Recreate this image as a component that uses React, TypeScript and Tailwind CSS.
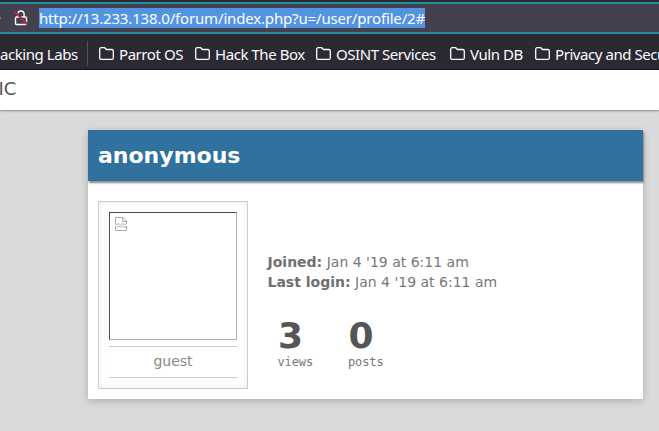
import type { ReactNode } from "react";

function Folder() {
  return (
    <svg className="mt-[2px] h-4 w-[15px] shrink-0" viewBox="0 0 15 16" fill="none" stroke="#fbfbfe" strokeWidth="1.3">
      <path d="M2.2 1.7h3.5l1.7 1.8h5.4c.9 0 1.5.6 1.5 1.5v6.9c0 .9-.6 1.5-1.5 1.5H2.2c-.9 0-1.5-.6-1.5-1.5V3.2c0-.9.6-1.5 1.5-1.5z" />
    </svg>
  );
}

function Bookmark({ label, className }: { label: string; className: string }) {
  return (
    <div className={`flex shrink-0 gap-[5px] pt-[10px] ${className}`}>
      <Folder />
      <span className="leading-5">{label}</span>
    </div>
  );
}

function Stat({ value, children }: { value: string; children: ReactNode }) {
  return (
    <div className="w-[70.5px]">
      <div className="h-[38px] text-[36px] leading-[38px] font-bold text-[#555]">{value}</div>
      <div className="-ml-[0.5px] font-['DejaVu_Sans_Mono',monospace] text-[12px] leading-[14px] tracking-[-0.1px] text-[#777]">{children}</div>
    </div>
  );
}

export default function App() {
  return (
    <div className="flex h-[431px] w-[659px] flex-col overflow-hidden bg-[#dadada] font-['DejaVu_Sans',sans-serif]">
      <div className="h-[70px] shrink-0 border-b border-[#0c0c0d] bg-[#2b2a33] pt-[2px] font-['Noto_Sans',sans-serif] text-[#fbfbfe]">
        <div className="flex h-8 items-center border-y-2 border-[#208ea3] bg-[#42414d]">
          <div className="h-[2px] w-px bg-[#777681]" />
          <svg className="ml-[12px] h-[18px] w-[16px] shrink-0" viewBox="0 0 16 18" fill="none">
            <path d="M4.7 8V5.2a3.2 3.2 0 0 1 6.4 0V8M3.6 8h8.8c.7 0 1.1.4 1.1 1.1v5.3c0 .7-.4 1.1-1.1 1.1H3.6c-.7 0-1.1-.4-1.1-1.1V9.1c0-.7.4-1.1 1.1-1.1z" stroke="#fbfbfe" strokeWidth="1.4" />
            <path d="M1.8 2 15 15.2" stroke="#42414d" strokeWidth="1.2" />
            <path d="M1 2.5 14.5 16" stroke="#e21b49" strokeWidth="1.4" />
          </svg>
          <div className="ml-[10px] h-5 w-[386px] shrink-0 bg-[#5294e2] text-[15px] leading-5 tracking-[-0.165px] whitespace-nowrap text-white">
            http://13.233.138.0/forum/index.php?u=/user/profile/2#
          </div>
        </div>
        <div className="flex h-[35px] overflow-hidden text-[15px] tracking-[-0.44px] whitespace-nowrap">
          <span className="w-[87px] shrink-0 pt-[10px] leading-5">acking Labs</span>
          <div className="mt-[7px] h-[25px] w-px shrink-0 bg-[#52515e]" />
          <Bookmark label="Parrot OS" className="ml-[11px] w-[96px]" />
          <Bookmark label="Hack The Box" className="w-[121px]" />
          <Bookmark label="OSINT Services" className="w-[134px]" />
          <Bookmark label="Vuln DB" className="w-[85px]" />
          <Bookmark label="Privacy and Security" className="w-[160px]" />
        </div>
      </div>

      <div className="h-10 shrink-0 bg-white shadow-[0_1px_2px_#888]">
        <div className="-ml-[1.5px] pt-[9px] text-[18px] leading-5 text-[#555]">IC</div>
      </div>

      <div className="mt-5 ml-[88px] h-[269px] w-[555px] shrink-0 bg-white shadow-[0_2px_8px_rgba(0,0,0,0.2)]">
        <div className="h-[51px] bg-[#31719e] px-[10px] text-[22px] leading-[51px] font-bold text-white shadow-[1px_2px_2px_#888]">
          anonymous
        </div>
        <div className="flex pt-5 pl-[10px]">
          <div className="h-[188px] w-[150px] border border-[#ccc] p-[10px] shadow-[inset_0_0_8px_#eee]">
            <div className="h-32 border border-t-[#4d4d4d] border-r-[#b0b0b0] border-b-[#b0b0b0] border-l-[#4d4d4d] bg-white pt-[4px] pl-[5px]">
              <svg className="h-[14px] w-3" viewBox="0 0 12 14" fill="none" stroke="#aaa">
                <path d="M.5 7V.5H8L11.5 4V7M7.5.5V4.5H11.5M.5 7l1 1 2-1.5 2 1.5 2-1.5 2 1.5 2-1.5M.5 9.5l1 1 2-1.5 2 1.5 2-1.5 2 1.5 2-1.5V13.5H.5V9.5" />
              </svg>
            </div>
            <div className="mt-[6px] h-8 border-y border-[#ccc] text-center text-[14px] leading-[28px] text-[#888]">guest</div>
          </div>
          <div className="ml-[19.5px] pt-[51px] text-[14px] leading-5 text-[#777]">
            <div><b className="text-[#707070]">Joined:</b> Jan 4 '19 at 6:11 am</div>
            <div><b className="text-[#707070]">Last login:</b> Jan 4 '19 at 6:11 am</div>
            <div className="mt-[25px] ml-[10.5px] flex">
              <Stat value="3">views</Stat>
              <Stat value="0">posts</Stat>
            </div>
          </div>
        </div>
      </div>
    </div>
  );
}
